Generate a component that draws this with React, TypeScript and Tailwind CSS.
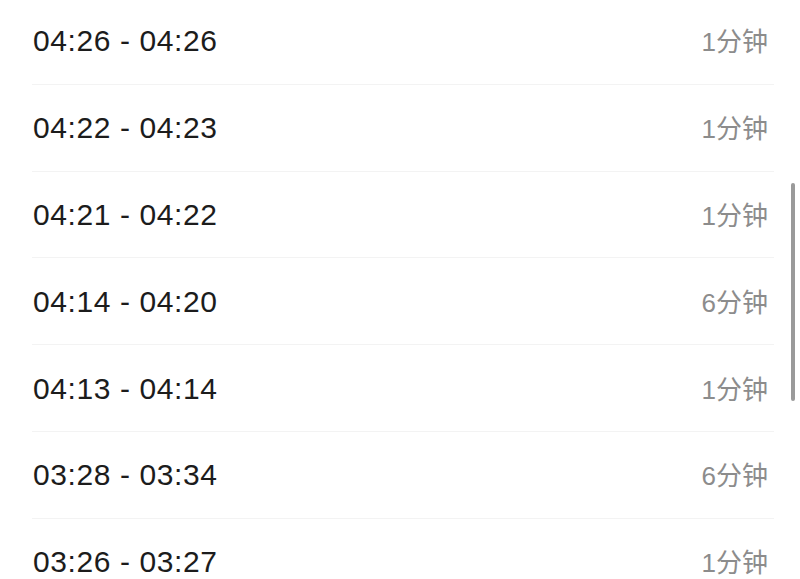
import React from "react";

const rows = [
  { range: "04:26 - 04:26", dur: "1分钟" },
  { range: "04:22 - 04:23", dur: "1分钟" },
  { range: "04:21 - 04:22", dur: "1分钟" },
  { range: "04:14 - 04:20", dur: "6分钟" },
  { range: "04:13 - 04:14", dur: "1分钟" },
  { range: "03:28 - 03:34", dur: "6分钟" },
  { range: "03:26 - 03:27", dur: "1分钟" },
];

export default function App() {
  return (
    <div className="relative h-[579px] w-[800px] overflow-hidden bg-white">
      <div className="-mt-[2px] flex flex-col">
        {rows.map((r, i) => (
          <div key={i} className="flex h-[86.8px] flex-col">
            <div className="flex flex-1 items-center justify-between pl-[33px] pr-[32px]">
              <span className="font-['Liberation_Sans',sans-serif] text-[30px] tracking-[0.6px] text-[#1c1c1c]">
                {r.range}
              </span>
              <span className="mt-[4px] font-['Liberation_Sans','Noto_Sans_CJK_SC',sans-serif] text-[26px] text-[#8c8c8c]">
                {r.dur}
              </span>
            </div>
            <div className="ml-[32px] mr-[26px] h-px bg-[#f3f3f3]" />
          </div>
        ))}
      </div>
      <div className="absolute right-[5px] top-[183px] h-[218px] w-[4px] rounded-full bg-[#9a9a9a]" />
    </div>
  );
}
